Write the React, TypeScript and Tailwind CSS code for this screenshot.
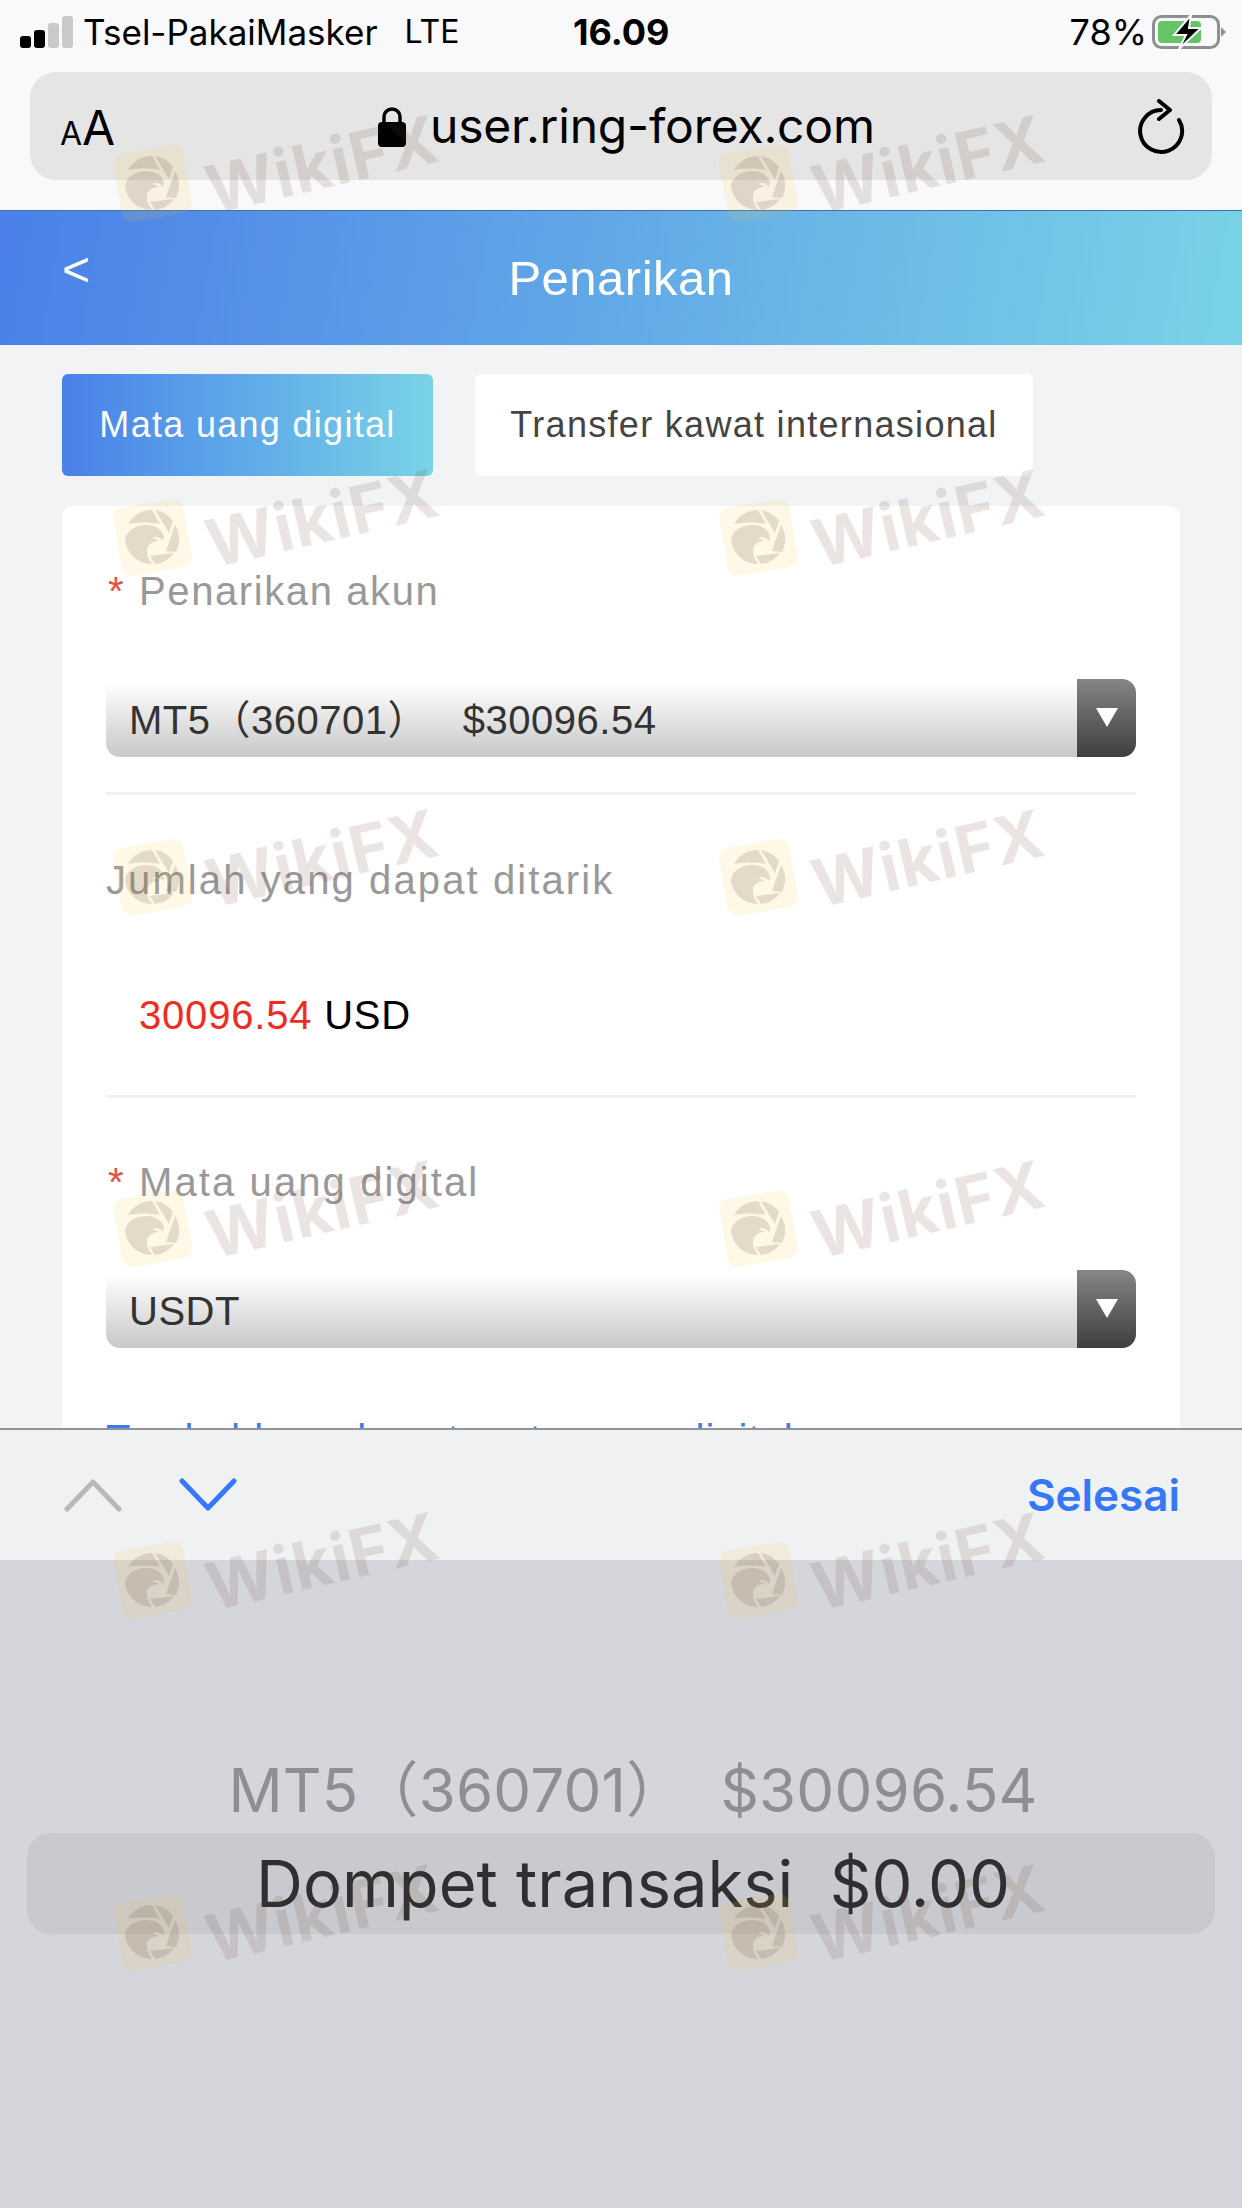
const ui = { fontFamily: 'Inter, "Noto Sans CJK SC", sans-serif' }
const web = { fontFamily: '"Liberation Sans", "Noto Sans CJK SC", sans-serif' }

function SelectBox({ label }: { label: string }) {
  return (
    <div className="flex h-[78px] rounded-[14px] bg-gradient-to-b from-white from-[5%] to-[#cbcbcb] to-[95%] overflow-hidden">
      <div className="flex-1 whitespace-pre pl-[23px] pt-[18px] text-[40px] leading-[46px] tracking-[0.5px] text-[#333]">{label}</div>
      <div className="flex w-[59px] justify-center bg-gradient-to-b from-[#868686] to-[#3f3f3f] pt-[29px]">
        <svg width="22" height="19" viewBox="0 0 22 19">
          <path d="M0 0h22L11 19z" fill="#fff" />
        </svg>
      </div>
    </div>
  )
}

function Label({ text, required, wide }: { text: string; required?: boolean; wide?: boolean }) {
  return (
    <div className={`flex h-[46px] items-center text-[40px] leading-[46px] text-[#999] ${wide ? 'tracking-[2.1px]' : 'tracking-[1.6px]'}`}>
      {required && <span className="w-[33px] pl-[2px] text-[#e8503f]">*</span>}
      <span>{text}</span>
    </div>
  )
}

function WikiMark() {
  return (
    <div className="relative">
      <svg width="120" height="100" viewBox="0 0 120 100">
        <rect x="25" y="13" width="71" height="69" rx="10" transform="rotate(-10 60 47)" fill="#f5c842" fillOpacity="0.13" />
        <g fill="#6b4a3c" fillOpacity="0.17">
          <path d="M36 34A27 27 0 0 1 60 20L68 34C58 32 46 32 36 34z" />
          <path d="M33 50C34 42 42 35 54 35C62 35 70 38 72 47L71 51C68 47 64 46 60 48C63 49 66 50 67 51C60 51 54 55 55 62C55 66 57 70 60 74A27 27 0 0 1 33 50z" />
          <path d="M63 20A27 27 0 0 1 81 31L77 43z" />
          <path d="M83 35A27 27 0 0 1 84 62L74 61z" />
          <path d="M58 66L82 63A27 27 0 0 1 63 74z" />
        </g>
      </svg>
      <div className="absolute left-[112px] top-[-12px] rotate-[-13deg] text-[66px] font-bold leading-[80px] tracking-[1px] text-[#6b4a3c]/[0.14]" style={ui}>
        WikiFX
      </div>
    </div>
  )
}

export default function App() {
  return (
    <div className="relative flex h-[2208px] w-[1242px] flex-col overflow-hidden bg-[#f2f3f5]" style={web}>
      {/* Safari chrome */}
      <div className="h-[210px] shrink-0 bg-[#f9f9fb] px-[30px] text-black" style={ui}>
        <div className="relative -mx-[10px] flex h-[62px] items-center pt-[1px] text-[35px] leading-[40px]">
          <div className="flex h-[32px] items-end gap-[3px]">
            <div className="h-[12px] w-[11px] rounded-[3px] bg-black" />
            <div className="h-[18px] w-[11px] rounded-[3px] bg-black" />
            <div className="h-[25px] w-[11px] rounded-[3px] bg-[#c9c9cb]" />
            <div className="h-[32px] w-[11px] rounded-[3px] bg-[#c9c9cb]" />
          </div>
          <span className="ml-[10px]">Tsel-PakaiMasker</span>
          <span className="ml-[27px] text-[32px]">LTE</span>
          <span className="absolute left-[553px] text-[36px] font-bold">16.09</span>
          <span className="ml-auto text-[36px]">78%</span>
          <svg className="-mr-[4px] ml-[5px]" width="74" height="36" viewBox="0 0 74 36">
            <rect x="1.5" y="2.5" width="65" height="31" rx="8" fill="none" stroke="#8f8f8f" strokeWidth="3" />
            <rect x="6" y="7" width="43" height="22" rx="4" fill="#65c466" />
            <path d="M69 13l5 5-5 5z" fill="#8f8f8f" />
            <path d="M39 1L22 21h12l-7 14 22-21H37z" fill="#000" stroke="#f9f9fb" strokeWidth="2" />
          </svg>
        </div>
        <div className="mt-[10px] flex h-[108px] items-center rounded-[26px] bg-[#e5e5e5] pl-[30px] pr-[26px]">
          <span className="mt-[4px] w-[318px] leading-none">
            <span className="text-[32px]">A</span>
            <span className="text-[48px]">A</span>
          </span>
          <svg width="28" height="40" viewBox="0 0 28 40" className="mt-[2px]">
            <rect x="0" y="15" width="28" height="25" rx="4" fill="#000" />
            <path d="M6 17V10a8 8 0 0 1 16 0v7" fill="none" stroke="#000" strokeWidth="3.5" />
          </svg>
          <span className="ml-[24px] text-[48px] leading-[56px] tracking-[-0.2px]">user.ring-forex.com</span>
          <svg className="ml-auto mt-[2px]" width="48" height="56" viewBox="0 0 48 56" fill="none" stroke="#000" strokeWidth="4" strokeLinecap="round" strokeLinejoin="round">
            <path d="M23 11A21 21 0 1 0 41 21" />
            <path d="M21 2l11 9-11 9" />
          </svg>
        </div>
      </div>

      {/* page header */}
      <div className="relative flex h-[135px] shrink-0 items-center justify-center border-t border-[#3f6fb5] bg-[linear-gradient(100deg,#4a80e8,#7ad3e6)] text-white">
        <span className="absolute left-[62px] top-[34px] text-[48px] leading-[50px]">&lt;</span>
        <span className="text-[49px] leading-[52px] tracking-[0.5px]">Penarikan</span>
      </div>

      {/* form, cut off by the keyboard toolbar */}
      <div className="flex-1 overflow-hidden px-[62px] pt-[29px]">
        <div className="flex gap-[42px]">
          <div className="flex h-[102px] w-[371px] items-center justify-center rounded-[6px] bg-gradient-to-r from-[#4a80e8] to-[#7ad3e6] text-[36px] tracking-[1.3px] text-white">
            Mata uang digital
          </div>
          <div className="flex h-[102px] w-[558px] items-center justify-center rounded-[6px] bg-white text-[36px] tracking-[1.3px] text-[#444]">
            Transfer kawat internasional
          </div>
        </div>
        <div className="mt-[30px] h-[1000px] rounded-[10px] bg-white px-[44px] pt-[62px]">
          <Label text="Penarikan akun" required />
          <div className="mt-[65px]">
            <SelectBox label={'MT5（360701）\u00a0\u00a0\u00a0$30096.54'} />
          </div>
          <div className="mt-[35px] h-[3px] bg-[#f0f0f0]" />
          <div className="mt-[62px]">
            <Label text="Jumlah yang dapat ditarik" wide />
          </div>
          <div className="mt-[89px] pl-[33px] text-[40px] leading-[46px] tracking-[0.8px] text-black">
            <span className="text-[#ef2b22]">30096.54</span> USD
          </div>
          <div className="mt-[57px] h-[3px] bg-[#f0f0f0]" />
          <div className="mt-[61px]">
            <Label text="Mata uang digital" required wide />
          </div>
          <div className="mt-[65px]">
            <SelectBox label="USDT" />
          </div>
          <div className="mt-[68px] text-[40px] leading-[46px] tracking-[1px] text-[#3f7be8]">Tambahkan alamat mata uang digital</div>
        </div>
      </div>

      {/* keyboard accessory */}
      <div className="flex h-[132px] shrink-0 items-center border-t-2 border-[#929299] bg-[#f0f1f3] pl-[64px] pr-[62px]" style={ui}>
        <svg width="58" height="36" viewBox="0 0 58 36" fill="none" stroke="#b9b9bb" strokeWidth="5" strokeLinecap="round" strokeLinejoin="round">
          <path d="M3 32L29 5l26 27" />
        </svg>
        <svg className="ml-[57px]" width="58" height="36" viewBox="0 0 58 36" fill="none" stroke="#3478f6" strokeWidth="5" strokeLinecap="round" strokeLinejoin="round">
          <path d="M3 4l26 27L55 4" />
        </svg>
        <span className="ml-auto text-[44px] font-semibold leading-[52px] text-[#3478f6]">Selesai</span>
      </div>

      {/* picker */}
      <div className="h-[648px] shrink-0 bg-[#d5d6db] px-[27px] pt-[194px] text-center" style={ui}>
        <div className="whitespace-pre pl-[24px] text-[60px] leading-[72px] tracking-[0.2px] text-[#8e8f93]">{'MT5（360701）\u00a0\u00a0$30096.54'}</div>
        <div className="mt-[7px] flex h-[101px] items-center justify-center rounded-[24px] bg-[#c9cacf] pl-[24px] text-[65px] text-[#2f2f31]">
          Dompet transaksi&nbsp;&nbsp;$0.00
        </div>
      </div>

      {/* watermark */}
      <div className="pointer-events-none absolute inset-0 grid grid-cols-[606px_606px] grid-rows-[354px_340px_351px_352px_352px_352px] pl-[92px] pt-[136px]">
        {Array.from({ length: 12 }).map((_, i) => (
          <WikiMark key={i} />
        ))}
      </div>
    </div>
  )
}
